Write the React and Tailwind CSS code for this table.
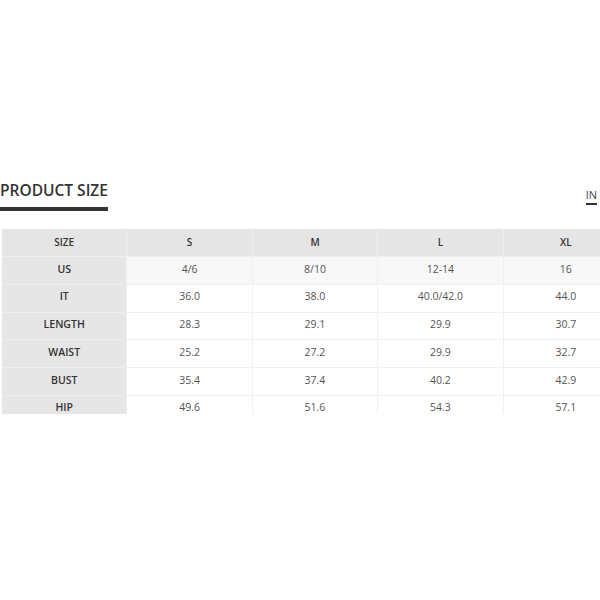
const cols = ['S', 'M', 'L', 'XL'];

const rows = [
  { label: 'US', values: ['4/6', '8/10', '12-14', '16'], shaded: true },
  { label: 'IT', values: ['36.0', '38.0', '40.0/42.0', '44.0'] },
  { label: 'LENGTH', values: ['28.3', '29.1', '29.9', '30.7'] },
  { label: 'WAIST', values: ['25.2', '27.2', '29.9', '32.7'] },
  { label: 'BUST', values: ['35.4', '37.4', '40.2', '42.9'] },
  { label: 'HIP', values: ['49.6', '51.6', '54.3', '57.1'] },
];

const App = () => {
  return (
    <div className="w-[600px] h-[600px] bg-white overflow-hidden font-['Open_Sans',sans-serif]">
      {/* HEADING */}
      <div className="pt-[180px] flex justify-between items-start">
        <div className="w-[108px]">
          <h2 className="text-[15.5px] leading-[20px] font-semibold text-[#333] whitespace-nowrap">
            PRODUCT SIZE
          </h2>
          <div className="mt-[7px] h-[4px] bg-[#333]"></div>
        </div>
        <div className="mt-[8px] mr-[3px] flex flex-col items-center">
          <span className="text-[11px] leading-[14px] text-[#444]">IN</span>
          <div className="mt-[1px] w-full h-[2px] bg-[#333]"></div>
        </div>
      </div>

      {/* TABLE */}
      <div className="mt-[18px] ml-[2px] w-[627px] h-[185px] overflow-hidden">
        <div className="grid grid-cols-5 h-[27px] bg-[#e5e5e5] text-[10px] font-semibold text-[#333]">
          <div className="flex items-center justify-center border-r border-[#efefef]">SIZE</div>
          {cols.map((c) => (
            <div key={c} className="flex items-center justify-center border-r border-[#efefef]">
              {c}
            </div>
          ))}
        </div>

        {rows.map((r) => (
          <div key={r.label} className="grid grid-cols-5 h-[27.75px] border-t border-[#efefef] text-[10.5px]">
            <div className="flex items-center justify-center pb-[2px] bg-[#e6e6e6] font-semibold text-[#333] border-r border-[#efefef]">
              {r.label}
            </div>
            {r.values.map((v, i) => (
              <div
                key={i}
                className={`flex items-center justify-center pb-[2px] text-[#555] border-r border-[#f0f0f0] ${
                  r.shaded ? 'bg-[#f8f8f8]' : 'bg-white'
                }`}
              >
                {v}
              </div>
            ))}
          </div>
        ))}
      </div>
    </div>
  );
};

export default App;
